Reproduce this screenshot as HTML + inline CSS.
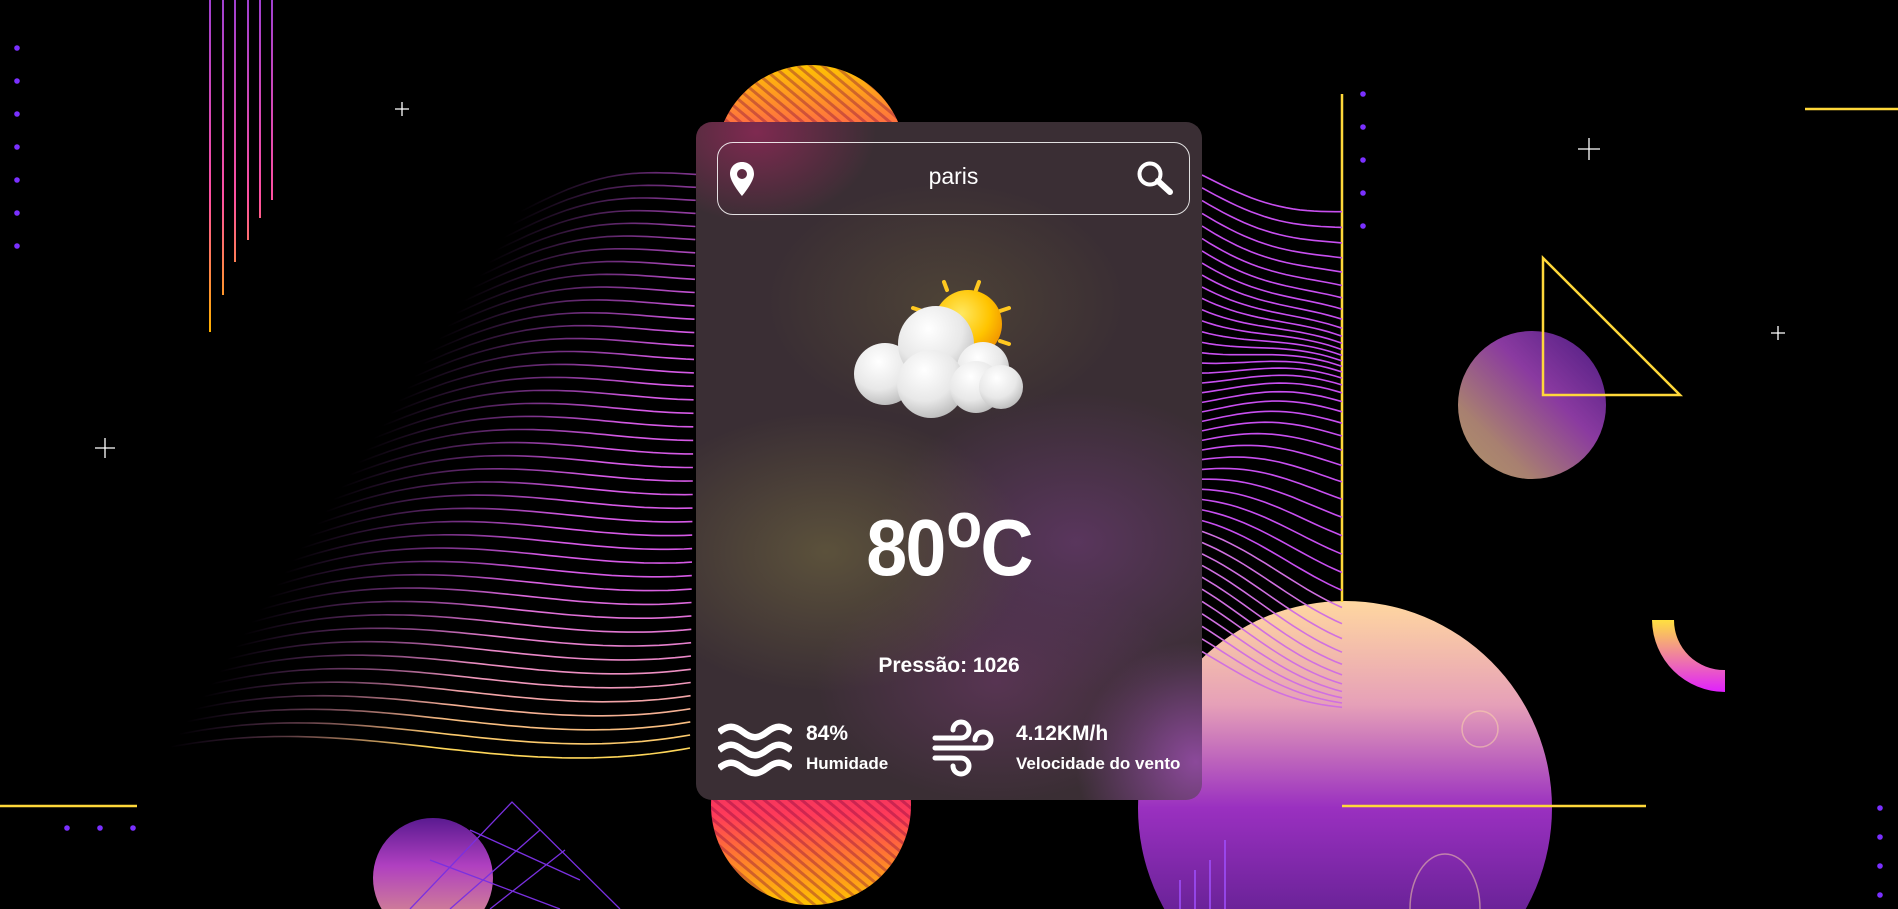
<!DOCTYPE html>
<html><head><meta charset="utf-8"><style>
*{margin:0;padding:0;box-sizing:border-box}
html,body{width:1898px;height:909px;overflow:hidden}
body{background:#000;position:relative;font-family:"Liberation Sans",Arial,sans-serif}
#bg{position:absolute;left:0;top:0}
.card{position:absolute;left:696px;top:122px;width:506px;height:678px;border-radius:16px;overflow:hidden;
background:
radial-gradient(ellipse 120px 90px at 60px 10px,rgba(150,40,90,.75),transparent),
radial-gradient(ellipse 200px 140px at 130px 430px,rgba(95,85,60,.9),transparent),
radial-gradient(ellipse 180px 120px at 250px 180px,rgba(85,75,55,.7),transparent),
radial-gradient(ellipse 200px 150px at 380px 420px,rgba(95,55,100,.85),transparent),
radial-gradient(ellipse 180px 120px at 300px 560px,rgba(100,55,95,.7),transparent),
radial-gradient(ellipse 120px 120px at 500px 640px,rgba(160,80,180,.8),transparent),
#3a2e34}
.search{position:absolute;left:21px;top:20px;width:473px;height:73px;border:1.5px solid rgba(255,255,255,.85);border-radius:16px}
.search .t{position:absolute;left:0;right:0;top:20px;text-align:center;color:#fff;font-size:23px}
.temp{position:absolute;left:0;right:0;top:380px;text-align:center;color:#fff;font-weight:bold;font-size:80px;letter-spacing:-2px;transform:scaleX(.92)}
.temp sup{font-size:64px;position:relative;top:-14px;vertical-align:top;margin-left:2px}
.pres{position:absolute;left:0;right:0;top:532px;text-align:center;color:#fff;font-weight:bold;font-size:21px}
.lbl{position:absolute;color:#fff;font-weight:bold}
</style></head><body>
<svg id="bg" width="1898" height="909" xmlns="http://www.w3.org/2000/svg">
<defs>
<linearGradient id="gTop" x1="0" y1="0" x2="0" y2="1"><stop offset="0" stop-color="#ffc400"/><stop offset=".5" stop-color="#ff3a6a"/><stop offset="1" stop-color="#d0206a"/></linearGradient>
<linearGradient id="gBot" x1="0" y1="0" x2="0" y2="1"><stop offset="0" stop-color="#c0206a"/><stop offset=".55" stop-color="#ff3a5a"/><stop offset="1" stop-color="#ffc400"/></linearGradient>
<linearGradient id="gPlanet" x1="0" y1="0" x2="0" y2="1"><stop offset="0" stop-color="#ffd7a0"/><stop offset=".25" stop-color="#e6a0b8"/><stop offset=".5" stop-color="#9a30c0"/><stop offset="1" stop-color="#3a1570"/></linearGradient>
<linearGradient id="gMid" x1="1" y1="0" x2="0" y2="1"><stop offset="0" stop-color="#4a1a80"/><stop offset=".4" stop-color="#8a3aa0"/><stop offset=".75" stop-color="#a88070"/><stop offset="1" stop-color="#b0946a"/></linearGradient>
<linearGradient id="gSmall" x1="0" y1="0" x2="0" y2="1"><stop offset="0" stop-color="#5a1a90"/><stop offset=".4" stop-color="#b040c0"/><stop offset="1" stop-color="#e0a080"/></linearGradient>
<linearGradient id="gQ" x1="0" y1="0" x2="0" y2="1"><stop offset="0" stop-color="#ffe040"/><stop offset="1" stop-color="#e020ff"/></linearGradient>
<linearGradient id="gV" gradientUnits="userSpaceOnUse" x1="0" y1="0" x2="0" y2="330"><stop offset="0" stop-color="#a040d0"/><stop offset=".6" stop-color="#ff50a0"/><stop offset="1" stop-color="#ffb000"/></linearGradient>
<pattern id="str" width="8" height="8" patternUnits="userSpaceOnUse" patternTransform="rotate(40)"><rect width="8" height="3" fill="rgba(120,0,60,.35)"/></pattern>
</defs>
<circle cx="811" cy="160" r="95" fill="url(#gTop)"/><circle cx="811" cy="160" r="95" fill="url(#str)"/>
<circle cx="811" cy="805" r="100" fill="url(#gBot)"/><circle cx="811" cy="805" r="100" fill="url(#str)"/>
<circle cx="1345" cy="808" r="207" fill="url(#gPlanet)"/>
<g fill="none" stroke="rgba(255,220,170,.5)" stroke-width="1.5"><circle cx="1480" cy="729" r="18"/><path d="M1410 909 a35 55 0 0 1 70 0"/></g>
<circle cx="1532" cy="405" r="74" fill="url(#gMid)"/>
<circle cx="433" cy="878" r="60" fill="url(#gSmall)"/>
<g stroke="#7a30e0" stroke-width="1.3" fill="none"><path d="M410 909 L512 802 L620 909"/><path d="M450 909 L540 830"/><path d="M490 909 L565 850"/><path d="M430 860 L560 909"/><path d="M470 830 L580 880"/></g>
<polygon points="1543,258 1680,395 1543,395" fill="none" stroke="#ffd83a" stroke-width="2.5"/>
<g stroke="#ffd83a" stroke-width="2.5"><line x1="1342" y1="94" x2="1342" y2="602"/><line x1="1805" y1="109" x2="1898" y2="109"/><line x1="0" y1="806" x2="137" y2="806"/><line x1="1342" y1="806" x2="1646" y2="806"/></g>
<path d="M1652 620 h22 a50 50 0 0 0 51 50 v22 a73 73 0 0 1 -73 -72z" fill="url(#gQ)"/>
<g stroke="url(#gV)" stroke-width="2"><line x1="210" y1="0" x2="210" y2="332"/><line x1="223" y1="0" x2="223" y2="295"/><line x1="235" y1="0" x2="235" y2="262"/><line x1="248" y1="0" x2="248" y2="240"/><line x1="260" y1="0" x2="260" y2="218"/><line x1="272" y1="0" x2="272" y2="200"/></g>
<g stroke="#a050ff" stroke-width="1.5"><line x1="1180" y1="909" x2="1180" y2="880"/><line x1="1195" y1="909" x2="1195" y2="870"/><line x1="1210" y1="909" x2="1210" y2="860"/><line x1="1225" y1="909" x2="1225" y2="840"/></g>
<g fill="#7a30ff" id="dots"></g>
<g stroke="#fff" stroke-width="1.3"><path d="M395 109h14M402 102v14"/><path d="M95 448h20M105 438v20"/><path d="M1578 149h22M1589 138v22"/><path d="M1771 333h14M1778 326v14"/></g>
<g id="waves" fill="none" stroke-width="1.6"></g>
</svg>

<div class="card">
 <div class="search">
  <svg style="position:absolute;left:11px;top:18px" width="26" height="36" viewBox="0 0 26 36"><path d="M13 1C6 1 1 6 1 13c0 8 12 22 12 22s12-14 12-22C25 6 20 1 13 1zm0 17a5 5 0 1 1 0-10 5 5 0 0 1 0 10z" fill="#fff"/></svg>
  <div class="t">paris</div>
  <svg style="position:absolute;left:418px;top:17px" width="40" height="36" viewBox="0 0 40 36"><circle cx="14" cy="14" r="10.5" fill="none" stroke="#fff" stroke-width="4"/><path d="M22 21l12 11" stroke="#fff" stroke-width="6" stroke-linecap="round"/></svg>
 </div>
 <svg style="position:absolute;left:155px;top:150px" width="200" height="160" viewBox="0 0 200 160">
  <defs>
   <radialGradient id="sun" cx=".4" cy=".35" r=".7"><stop offset="0" stop-color="#ffe860"/><stop offset=".6" stop-color="#ffc400"/><stop offset="1" stop-color="#f09000"/></radialGradient>
   <radialGradient id="cl" cx=".4" cy=".3" r=".75"><stop offset="0" stop-color="#ffffff"/><stop offset=".6" stop-color="#e8e8e8"/><stop offset="1" stop-color="#b8b8b8"/></radialGradient>
  </defs>
  <g stroke="#ffc820" stroke-width="4" stroke-linecap="round"><path d="M93 10l3 8"/><path d="M128 10l-3 8"/><path d="M62 36l9 3"/><path d="M158 36l-9 3"/><path d="M158 72l-9-3"/></g>
  <circle cx="117" cy="52" r="34" fill="url(#sun)"/>
  <circle cx="34" cy="102" r="31" fill="url(#cl)"/>
  <circle cx="85" cy="72" r="38" fill="url(#cl)"/>
  <circle cx="132" cy="96" r="26" fill="url(#cl)"/>
  <circle cx="80" cy="112" r="34" fill="url(#cl)"/>
  <circle cx="125" cy="115" r="26" fill="url(#cl)"/>
  <circle cx="150" cy="115" r="22" fill="url(#cl)"/>
 </svg>
 <div class="temp">80<sup>o</sup>C</div>
 <div class="pres">Pressão: 1026</div>
 <svg style="position:absolute;left:22px;top:601px" width="74" height="54" viewBox="0 0 74 54"><g fill="none" stroke="#fff" stroke-width="6.5"><path d="M1 9c9-7 15-7 24 0s15 7 24 0 15-7 24 0"/><path d="M1 27c9-7 15-7 24 0s15 7 24 0 15-7 24 0"/><path d="M1 45c9-7 15-7 24 0s15 7 24 0 15-7 24 0"/></g></svg>
 <div class="lbl" style="left:110px;top:600px;font-size:21px">84%</div>
 <div class="lbl" style="left:110px;top:632px;font-size:17px">Humidade</div>
 <svg style="position:absolute;left:236px;top:595px" width="64" height="64" viewBox="0 0 64 64"><g fill="none" stroke="#fff" stroke-width="5" stroke-linecap="round"><path d="M3 21h26a8 8 0 1 0-8-8"/><path d="M3 31h48a8 8 0 1 0-8-8"/><path d="M3 41h26a8 8 0 1 1-8 8"/></g></svg>
 <div class="lbl" style="left:320px;top:600px;font-size:21px">4.12KM/h</div>
 <div class="lbl" style="left:320px;top:632px;font-size:17px">Velocidade do vento</div>
</div>
<script>
var ns="http://www.w3.org/2000/svg";
var d=document.getElementById('dots');
function dot(x,y){var c=document.createElementNS(ns,'circle');c.setAttribute('cx',x);c.setAttribute('cy',y);c.setAttribute('r',2.8);d.appendChild(c);}
for(var i=0;i<7;i++)dot(17,48+i*33);
for(var i=0;i<5;i++)dot(1363,94+i*33);
[67,100,133].forEach(function(x){dot(x,828)});
for(var i=0;i<4;i++)dot(1880,808+i*29);
var w=document.getElementById('waves');
var defs=document.querySelector('defs');
function mix(a,b,k){return [a[0]+(b[0]-a[0])*k,a[1]+(b[1]-a[1])*k,a[2]+(b[2]-a[2])*k]}
function col(t){var a=[214,90,230],b=[240,150,190],c=[255,215,90];var r;if(t<.7)r=a;else if(t<.88)r=mix(a,b,(t-.7)/.18);else r=mix(b,c,(t-.88)/.12);return 'rgb('+r.map(Math.round).join(',')+')';}
var N=44;
for(var i=0;i<N;i++){
 var t=i/(N-1);
 var x0=520-350*t;
 var yC=172+530*t;
 var s='';
 for(var x=x0;x<=696;x+=8){
  var u=(x-x0)/(696-x0);
  var y=yC+(1-u)*(40+50*t)-30*Math.sin(u*3.3+t*1.5)*(0.5+t);
  s+=(x==x0?'M':'L')+x.toFixed(1)+' '+y.toFixed(1);
 }
 var pa=document.createElementNS(ns,'path');pa.setAttribute('d',s);
 var g=document.createElementNS(ns,'linearGradient');g.id='wg'+i;g.setAttribute('gradientUnits','userSpaceOnUse');g.setAttribute('x1',x0);g.setAttribute('x2',x0+260);g.setAttribute('y1',0);g.setAttribute('y2',0);
 g.innerHTML='<stop offset="0" stop-color="#a040c0" stop-opacity="0"/><stop offset="1" stop-color="'+col(t)+'"/>';
 defs.appendChild(g);
 pa.setAttribute('stroke','url(#wg'+i+')');
 w.appendChild(pa);
 // right part
 var yR=175+480*t, s2='';
 for(var x=1202;x<=1342;x+=7){
  var u=(x-1202)/140;
  var y=yR+u*(35+30*Math.sin(t*9))+12*Math.sin(u*3+t*6);
  s2+=(x==1202?'M':'L')+x+' '+y.toFixed(1);
 }
 var p2=document.createElementNS(ns,'path');p2.setAttribute('d',s2);
 p2.setAttribute('stroke',t<.75?'#c84ff0':'#d070e0');w.appendChild(p2);
}
</script>
</body></html>
